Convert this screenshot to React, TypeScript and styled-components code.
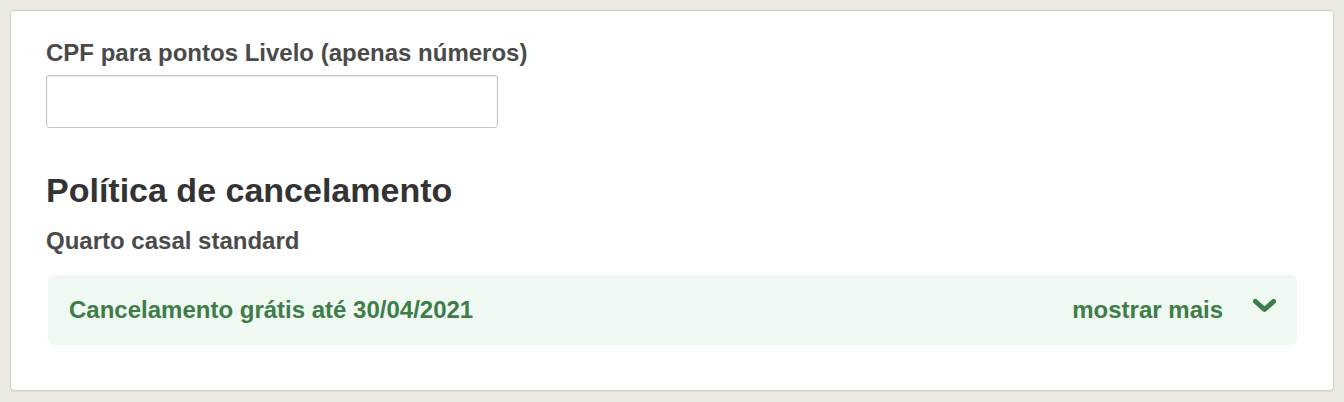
import styled, { createGlobalStyle } from "styled-components";

const GlobalStyle = createGlobalStyle`
  html, body {
    margin: 0;
    padding: 0;
    background: #ece9e3;
    font-family: "Liberation Sans", Arial, sans-serif;
  }
`;

const Page = styled.div`
  padding: 10px;
`;

const Card = styled.section`
  background: #fff;
  border: 1px solid #cfcdc8;
  border-radius: 4px;
  padding: 28px 36px 45px 35px;
  box-shadow: 0 1px 1px rgba(0, 0, 0, 0.06);
`;

const Field = styled.div`
  display: flex;
  flex-direction: column;
`;

const Label = styled.label`
  font-size: 24px;
  font-weight: 700;
  color: #4a4a4a;
  line-height: 28px;
  margin-bottom: 8px;
`;

const Input = styled.input`
  width: 452px;
  height: 53px;
  box-sizing: border-box;
  border: 1px solid #c4c4c4;
  border-radius: 3px;
  box-shadow: inset 0 1px 2px rgba(0, 0, 0, 0.08);
  font-size: 18px;
  padding: 0 12px;
  outline: none;
`;

const Title = styled.h2`
  margin: 42px 0 0 0;
  font-size: 34px;
  font-weight: 700;
  color: #333;
  line-height: 40px;
`;

const Subtitle = styled.h3`
  margin: 17px 0 0 0;
  font-size: 24px;
  font-weight: 700;
  color: #4a4a4a;
  line-height: 28px;
`;

const Policy = styled.div`
  margin: 20px 0 0 2px;
  background: #eff8f1;
  border-radius: 6px;
  height: 70px;
  display: flex;
  align-items: center;
  justify-content: space-between;
  padding: 0 20px 0 21px;
  color: #3d7d4a;
  font-size: 24px;
  font-weight: 700;
`;

const Toggle = styled.button`
  display: flex;
  align-items: center;
  gap: 29px;
  background: none;
  border: 0;
  padding: 0;
  color: inherit;
  font: inherit;
  cursor: pointer;
`;

const ChevronSvg = styled.svg`
  display: block;
  flex-shrink: 0;
  margin-bottom: 10px;
`;

const Chevron = () => (
  <ChevronSvg width="25" height="15" viewBox="0 0 25 15" fill="none">
    <path
      d="M3.5 3.5 L12.5 11.5 L21.5 3.5"
      stroke="#3d7d4a"
      strokeWidth="5"
      strokeLinecap="round"
      strokeLinejoin="round"
    />
  </ChevronSvg>
);

export default function App() {
  return (
    <Page>
      <GlobalStyle />
      <Card>
        <Field>
          <Label htmlFor="cpf">CPF para pontos Livelo (apenas números)</Label>
          <Input id="cpf" type="text" />
        </Field>
        <Title>Política de cancelamento</Title>
        <Subtitle>Quarto casal standard</Subtitle>
        <Policy>
          <span>Cancelamento grátis até 30/04/2021</span>
          <Toggle>
            mostrar mais
            <Chevron />
          </Toggle>
        </Policy>
      </Card>
    </Page>
  );
}
